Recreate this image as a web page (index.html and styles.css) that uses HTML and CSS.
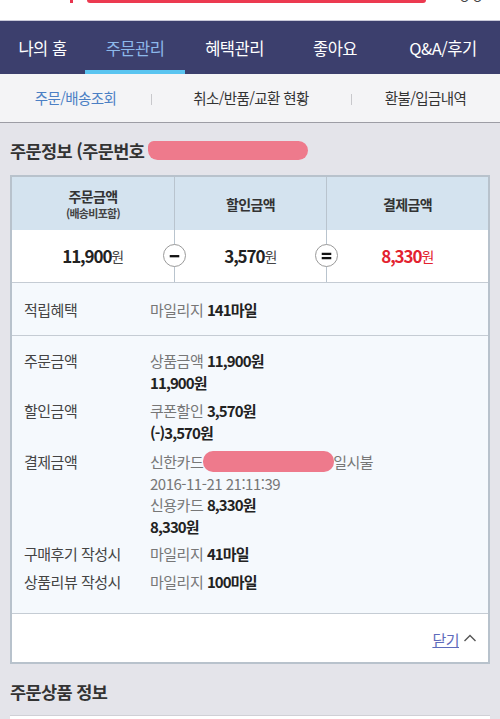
FILE: index.html
```html
<!DOCTYPE html>
<html lang="ko">
<head>
<meta charset="utf-8">
<link rel="stylesheet" href="styles.css">
</head>
<body>
<div class="top">
  <span class="mark"></span>
  <span class="searchbar"></span>
  <span class="topicon">ㅇㅇ</span>
</div>
<nav class="gnb">
  <a class="gnb-item">나의 홈</a>
  <a class="gnb-item active">주문관리</a>
  <a class="gnb-item">혜택관리</a>
  <a class="gnb-item">좋아요</a>
  <a class="gnb-item">Q&amp;A/후기</a>
</nav>
<nav class="lnb">
  <a class="lnb-item active">주문/배송조회</a>
  <a class="lnb-item sep">취소/반품/교환 현황</a>
  <a class="lnb-item sep">환불/입금내역</a>
</nav>
<h2 class="sec-title">주문정보 (주문번호 <span class="redact redact-title"></span></h2>
<div class="card">
  <div class="sum-head">
    <div class="cell"><span class="h-main">주문금액</span><small>(배송비포함)</small></div>
    <div class="cell"><span class="h-main">할인금액</span></div>
    <div class="cell"><span class="h-main">결제금액</span></div>
  </div>
  <div class="sum-vals">
    <div class="cell"><b>11,900</b><em>원</em></div>
    <div class="cell"><b>3,570</b><em>원</em>
      <span class="op op-minus"><svg width="22" height="22" viewBox="0 0 22 22"><rect x="6" y="10" width="10" height="2.4" fill="#111"/></svg></span>
    </div>
    <div class="cell red"><b>8,330</b><em>원</em>
      <span class="op op-eq"><svg width="22" height="22" viewBox="0 0 22 22"><rect x="6" y="7.6" width="10" height="2.4" fill="#111"/><rect x="6" y="12" width="10" height="2.4" fill="#111"/></svg></span>
    </div>
  </div>
  <div class="info">
    <div class="row benefit">
      <div class="label">적립혜택</div>
      <div class="val"><span class="g">마일리지</span> <b>141마일</b></div>
    </div>
  </div>
  <div class="info detail">
    <div class="row">
      <div class="label">주문금액</div>
      <div class="val"><p><span class="g">상품금액</span> <b>11,900원</b></p><p><b>11,900원</b></p></div>
    </div>
    <div class="row">
      <div class="label">할인금액</div>
      <div class="val"><p><span class="g">쿠폰할인</span> <b>3,570원</b></p><p><b>(-)3,570원</b></p></div>
    </div>
    <div class="row">
      <div class="label">결제금액</div>
      <div class="val"><p><span class="g">신한카드</span><span class="redact redact-card"></span><span class="g">일시불</span></p><p class="g">2016-11-21 21:11:39</p><p><span class="g">신용카드</span> <b>8,330원</b></p><p><b>8,330원</b></p></div>
    </div>
    <div class="row">
      <div class="label">구매후기 작성시</div>
      <div class="val"><span class="g">마일리지</span> <b>41마일</b></div>
    </div>
    <div class="row">
      <div class="label">상품리뷰 작성시</div>
      <div class="val"><span class="g">마일리지</span> <b>100마일</b></div>
    </div>
  </div>
  <div class="card-foot">
    <a class="close">닫기</a>
    <svg class="caret" width="14" height="10" viewBox="0 0 14 10"><path d="M1.5 8 L7 2.5 L12.5 8" fill="none" stroke="#555" stroke-width="1.4"/></svg>
  </div>
</div>
<h2 class="sec-title sec-title2">주문상품 정보</h2>
<div class="card card2"></div>
</body>
</html>
```
FILE: styles.css
```css
* { box-sizing: border-box; }
html, body { margin: 0; padding: 0; }
body {
  background: #e4e4ea;
  font-family: "Noto Sans CJK KR", "Noto Sans", sans-serif;
  color: #333;
  width: 500px;
  overflow: hidden;
  height: 719px;
}
.top {
  height: 21px;
  background: #fff;
  display: flex;
  align-items: flex-start;
  border-bottom: 1px solid #c9c9d9;
  overflow: hidden;
}
.mark {
  margin-left: 70px;
  width: 3px;
  height: 3px;
  background: #e8344e;
}
.searchbar {
  margin-left: 14px;
  width: 339px;
  height: 3px;
  background: #ec3a50;
  border-radius: 0 0 4px 4px;
}
.topicon {
  margin-left: 32px;
  margin-top: -11px;
  font-size: 14px;
  color: #444;
  line-height: 16px;
}
.gnb {
  display: grid;
  grid-template-columns: 85px 100px 99px 102px 114px;
  height: 53px;
  background: #3c3f6d;
}
.gnb-item {
  display: flex;
  align-items: center;
  justify-content: center;
  color: #fff;
  font-size: 16.5px;
  letter-spacing: -0.5px;
}
.gnb-item.active {
  color: #8db8ea;
  box-shadow: inset 0 -4px 0 #5ac4f0;
}
.lnb {
  display: grid;
  grid-template-columns: 151px 200px 149px;
  height: 49px;
  background: #f4f4f6;
  border-bottom: 1px solid #9d9da5;
}
.lnb-item {
  display: flex;
  align-items: center;
  justify-content: center;
  font-size: 14.5px;
  color: #333;
  letter-spacing: -0.6px;
  position: relative;
  padding-bottom: 1px;
}
.lnb-item.active { color: #4b7fc4; }
.lnb-item.sep::before {
  content: "";
  position: absolute;
  left: 0;
  top: 20px;
  width: 1px;
  height: 11px;
  background: #c8c8cc;
}
.sec-title {
  margin: 0;
  height: 52px;
  display: flex;
  align-items: center;
  padding-left: 10px;
  font-size: 17.5px;
  font-weight: 700;
  color: #333;
  letter-spacing: -0.6px;
  padding-top: 2px;
}
.redact {
  display: inline-block;
  background: #ee7a8c;
  border-radius: 10px;
}
.redact-title {
  width: 160px;
  height: 19px;
  margin-left: 4px;
  border-radius: 6px 10px 10px 10px;
}
.card {
  margin: 0 10px;
  border: 2px solid #b8c2cc;
  background: #fff;
}
.sum-head, .sum-vals {
  display: grid;
  grid-template-columns: 162px 152px 1fr;
}
.sum-head {
  background: #d4e3ef;
  height: 53px;
}
.sum-head .cell {
  display: flex;
  flex-direction: column;
  align-items: center;
  justify-content: center;
  font-weight: 700;
  color: #333;
  letter-spacing: -0.6px;
}
.h-main {
  display: block;
  font-size: 14px;
  line-height: 20px;
}
.sum-head small {
  display: block;
  font-size: 11px;
  line-height: 15px;
  font-weight: 700;
  color: #444;
  letter-spacing: -0.7px;
}
.cell + .cell { border-left: 1px solid #b9c4ce; }
.sum-vals {
  height: 53px;
  background: #fff;
  border-bottom: 1px solid #c5ccd4;
}
.sum-vals .cell {
  display: flex;
  align-items: center;
  justify-content: center;
  position: relative;
  padding-bottom: 1px;
  color: #222;
}
.sum-vals b {
  font-size: 17px;
  font-weight: 700;
  letter-spacing: -1.1px;
}
.sum-vals em {
  font-style: normal;
  font-size: 14px;
  color: #444;
  letter-spacing: -0.5px;
}
.sum-vals .red b, .sum-vals .red em { color: #e3222f; }
.op {
  position: absolute;
  left: -12px;
  top: 14px;
  width: 23px;
  height: 23px;
  border: 1px solid #9a9a9a;
  border-radius: 50%;
  background: #fff;
  display: flex;
  align-items: center;
  justify-content: center;
}
.op svg { display: block; }
.info {
  background: #f5f9fd;
  font-size: 15px;
  letter-spacing: -0.5px;
  color: #444;
}
.row {
  display: grid;
  grid-template-columns: 126px 1fr;
  padding-left: 12px;
}
.benefit {
  height: 53px;
  align-items: center;
  border-bottom: 1px solid #c5ccd4;
}
.detail {
  padding: 14px 0 14px;
  border-bottom: 1px solid #c5ccd4;
  line-height: 22px;
}
.detail .row { margin-bottom: 6px; }
.detail .row:nth-child(2) { margin-bottom: 7px; }
.detail .row:nth-child(3) p { line-height: 21.5px; }
.val p { margin: 0; }
.val b { font-weight: 700; color: #222; letter-spacing: -0.9px; }
.g { color: #777; }
.label { color: #444; }
.redact-card {
  width: 131px;
  height: 21px;
  vertical-align: -4px;
  margin: 0 -1px 0 0;
}
.card-foot {
  height: 48px;
  display: flex;
  align-items: center;
  justify-content: flex-end;
  padding-right: 11px;
  padding-top: 2px;
  gap: 4px;
}
.close {
  color: #5e6bbb;
  text-decoration: underline;
  font-size: 15px;
  letter-spacing: -0.5px;
}
.caret { display: block; margin-top: -2px; }
.sec-title2 { height: 51px; padding-top: 4px; }
.card2 { height: 40px; border: none; border-top: 1px solid #d0d0d6; }
```
